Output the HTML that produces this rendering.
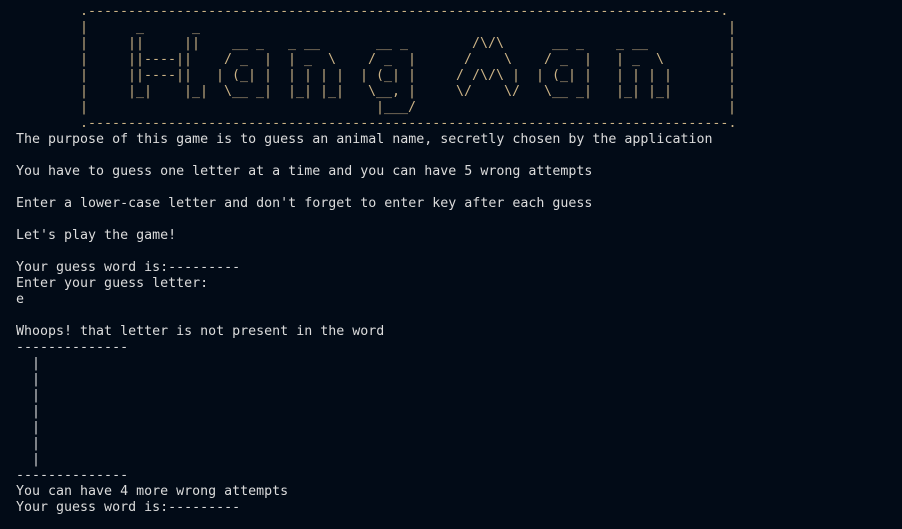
<!DOCTYPE html>
<html><head><meta charset="utf-8"><style>
html,body{margin:0;padding:0;background:#020b17;width:902px;height:529px;overflow:hidden}
.a{position:absolute;font-family:"DejaVu Sans Mono","Liberation Mono",monospace;font-size:13.3px;line-height:16px;white-space:pre;color:#cdb487}
pre{position:absolute;left:16px;top:132px;margin:0;font-family:"DejaVu Sans Mono","Liberation Mono",monospace;font-size:13.3px;line-height:16px;color:#dcdcdc}
</style></head><body>
<div id="art"></div>
<script>
var P=[
[0,8,"."+"-".repeat(79)+"."],
[1,8,"|"],[1,15,"_"],[1,22,"_"],[1,89,"|"],
[2,8,"|"],[2,14,"||"],[2,21,"||"],[2,27,"__ _"],[2,34,"_ __"],[2,45,"__ _"],[2,57,"/\\/\\"],[2,67,"__ _"],[2,75,"_ __"],[2,89,"|"],
[3,8,"|"],[3,14,"||----||"],[3,26,"/ _  |"],[3,34,"| _  \\"],[3,44,"/ _  |"],[3,56,"/    \\"],[3,66,"/ _  |"],[3,75,"| _  \\"],[3,89,"|"],
[4,8,"|"],[4,14,"||----||"],[4,25,"| (_| |"],[4,34,"| | | |"],[4,43,"| (_| |"],[4,55,"/ /\\/\\ |"],[4,65,"| (_| |"],[4,75,"| | | |"],[4,89,"|"],
[5,8,"|"],[5,14,"|_|"],[5,21,"|_|"],[5,26,"\\__ _|"],[5,34,"|_| |_|"],[5,44,"\\__, |"],[5,55,"\\/    \\/"],[5,66,"\\__ _|"],[5,75,"|_| |_|"],[5,89,"|"],
[6,8,"|"],[6,45,"|___/"],[6,89,"|"],
[7,8,"."+"-".repeat(80)+"."]
];
var h="";
P.forEach(function(p){h+='<div class="a" style="left:'+(16+p[1]*8)+'px;top:'+(4+p[0]*16)+'px"></div>';});
var d=document.getElementById("art");d.innerHTML=h;
var c=d.children;for(var i=0;i<P.length;i++)c[i].textContent=P[i][2];
</script>
<pre>The purpose of this game is to guess an animal name, secretly chosen by the application

You have to guess one letter at a time and you can have 5 wrong attempts

Enter a lower-case letter and don't forget to enter key after each guess

Let's play the game!

Your guess word is:---------
Enter your guess letter:
e

Whoops! that letter is not present in the word
--------------
  |
  |
  |
  |
  |
  |
  |
--------------
You can have 4 more wrong attempts
Your guess word is:---------</pre>
</body></html>
